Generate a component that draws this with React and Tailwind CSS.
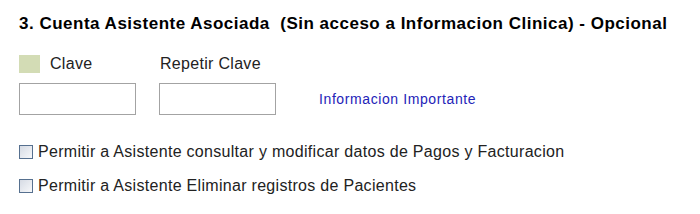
export default function App() {
    const font = { fontFamily: '"Liberation Sans", Arial, sans-serif' };

    return (
        <div className="w-[700px] h-[214px] bg-white text-black pl-[19px] pt-[14px]" style={font}>
            {/* Title */}
            <h2 className="text-[17px] leading-[20px] font-bold tracking-[0.5px] whitespace-pre">
                {'3. Cuenta Asistente Asociada  (Sin acceso a Informacion Clinica) - Opcional'}
            </h2>

            {/* Labels */}
            <div className="flex items-center mt-[21px] h-[18px]">
                <div className="w-[21px] h-[18px] bg-[#d3dcb5]" />
                <span className="ml-[10px] w-[110px] text-[16px] tracking-[0.3px] text-[#222]">Clave</span>
                <span className="text-[16px] tracking-[0.3px] text-[#222]">Repetir Clave</span>
            </div>

            {/* Inputs */}
            <div className="flex items-center mt-[10px]">
                <input
                    type="password"
                    className="w-[117px] h-[32px] border border-[#a3a3a3] bg-white outline-none"
                />
                <input
                    type="password"
                    className="ml-[23px] w-[117px] h-[32px] border border-[#a3a3a3] bg-white outline-none"
                />
                <a className="ml-[43px] text-[14px] tracking-[0.6px] text-[#2323b8] cursor-pointer">
                    Informacion Importante
                </a>
            </div>

            {/* Permissions */}
            <div className="flex flex-col gap-[20px] mt-[30px]">
                <label className="flex items-center gap-[5px] h-[14px] text-[16px] tracking-[0.3px] text-[#222]">
                    <span className="w-[14px] h-[14px] border border-[#56708f] bg-gradient-to-br from-[#d6dbe4] to-[#f7f8fa]" />
                    Permitir a Asistente consultar y modificar datos de Pagos y Facturacion
                </label>
                <label className="flex items-center gap-[5px] h-[14px] text-[16px] tracking-[0.3px] text-[#222]">
                    <span className="w-[14px] h-[14px] border border-[#56708f] bg-gradient-to-br from-[#d6dbe4] to-[#f7f8fa]" />
                    Permitir a Asistente Eliminar registros de Pacientes
                </label>
            </div>
        </div>
    );
}
